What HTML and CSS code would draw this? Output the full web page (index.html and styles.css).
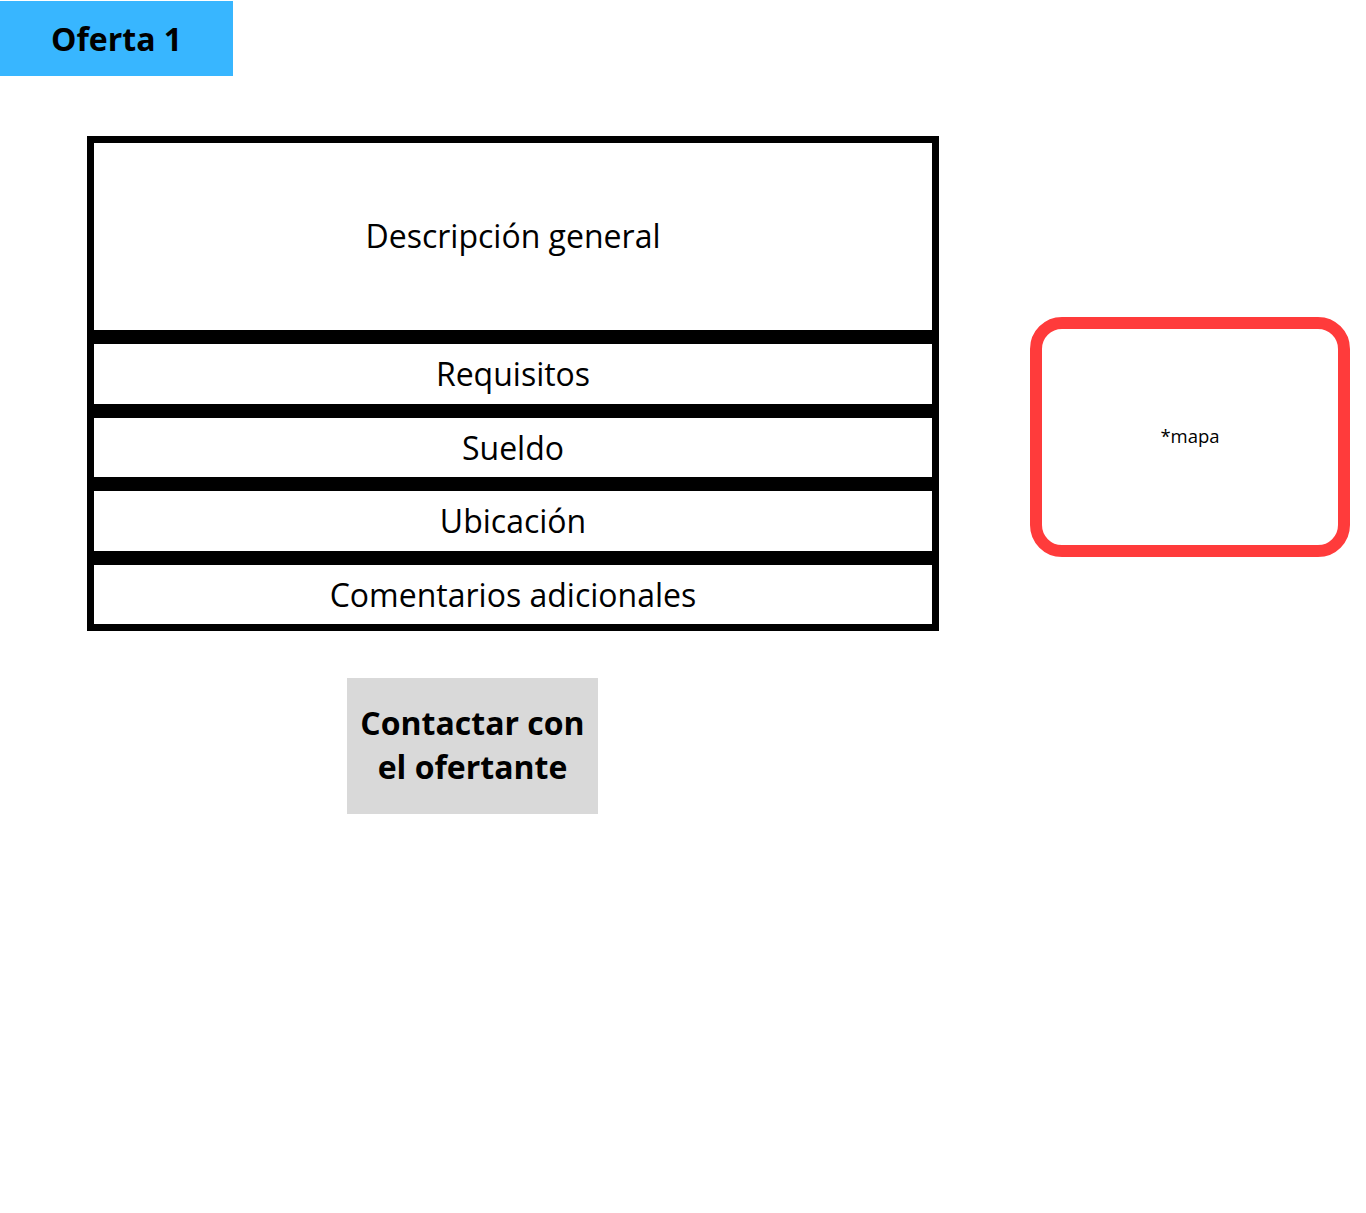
FILE: index.html
```html
<!DOCTYPE html>
<html lang="es">
<head>
  <meta charset="UTF-8">
  <title>Oferta 1</title>
  <link rel="stylesheet" href="styles.css">
</head>
<body>
  <!-- Cabecera de la oferta -->
  <div class="title-tag">Oferta 1</div>

  <div class="layout">
    <div class="details">
      <div class="field field-large">Descripción general</div>
      <div class="field">Requisitos</div>
      <div class="field">Sueldo</div>
      <div class="field">Ubicación</div>
      <div class="field">Comentarios adicionales</div>

      <button class="contact-btn">Contactar con el ofertante</button>
    </div>

    <div class="map-box">*mapa</div>
  </div>
</body>
</html>
```

FILE: styles.css
```css
body {
  font-family: "Open Sans", "DejaVu Sans", sans-serif;
  background-color: #fff;
  color: #000;
  margin: 0;
  padding: 0;
}
.title-tag {
  width: 233px;
  height: 75px;
  margin-top: 1px;
  background-color: #38b6ff;
  font-size: 32px;
  font-weight: bold;
  display: flex;
  align-items: center;
  justify-content: center;
  box-sizing: border-box;
}
.layout {
  display: flex;
  align-items: flex-start;
  padding-left: 87px;
  margin-top: 60px;
}
.details {
  width: 852px;
  display: flex;
  flex-direction: column;
}
.field {
  box-sizing: border-box;
  height: 73.5px;
  border: 7px solid #000;
  font-size: 32px;
  display: flex;
  align-items: center;
  justify-content: center;
}
.field-large {
  height: 201px;
  padding-bottom: 2px;
}
.contact-btn {
  align-self: flex-start;
  margin-top: 47px;
  margin-left: 260px;
  width: 251px;
  height: 136px;
  border: none;
  background-color: #d9d9d9;
  font-family: inherit;
  font-size: 32px;
  font-weight: bold;
  line-height: 44px;
  color: #000;
  padding: 0 6px 3px;
}
.map-box {
  box-sizing: border-box;
  width: 320px;
  height: 240px;
  margin-left: 91px;
  margin-top: 181px;
  border: 12px solid #ff3b3b;
  border-radius: 32px;
  font-size: 18.5px;
  padding-bottom: 4px;
  display: flex;
  align-items: center;
  justify-content: center;
}
```
